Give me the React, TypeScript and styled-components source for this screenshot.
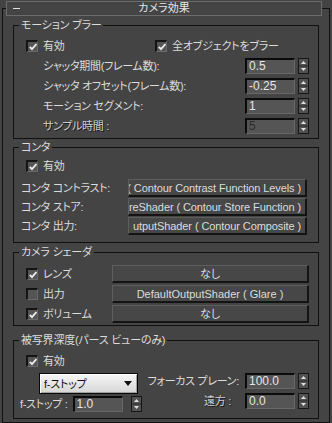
import React from "react";
import styled, { createGlobalStyle } from "styled-components";

const Global = createGlobalStyle`
  html, body { margin: 0; padding: 0; background: #444444; }
  body {
    font-family: "Liberation Sans", "Noto Sans CJK JP", sans-serif;
    font-size: 11px;
    color: #dcdcdc;
    font-feature-settings: "palt";
  }
  #root { padding-top: 1px; }
`;

const Rollout = styled.fieldset`
  box-sizing: border-box;
  width: 328px;
  margin: 0 0 0 2px;
  padding: 0;
  min-inline-size: 0;
  border: 1px solid #111111;
`;

const TitleBar = styled.legend`
  box-sizing: border-box;
  width: 316px;
  height: 15px;
  margin-left: 3px;
  padding: 0;
  border: 1px solid #6c6c6c;
  display: grid;
  grid-template-columns: 1fr auto 1fr;
  align-items: center;
  color: #e6e6e6;
  font-size: 11px;
`;

const Collapse = styled.span`
  width: 7px;
  height: 1px;
  margin-left: 6px;
  background: #e0e0e0;
`;

const TitleText = styled.span`
  line-height: 13px;
  height: 13px;
`;

const RolloutBody = styled.div`
  display: flex;
  flex-direction: column;
  padding: 2px 10px 3px 10px;
`;

const Group = styled.fieldset<{ $mt?: number }>`
  box-sizing: border-box;
  width: 306px;
  margin: ${(p) => p.$mt ?? 0}px 0 0 0;
  padding: 0;
  min-inline-size: 0;
  border: 1px solid #101010;
`;

const GroupLegend = styled.legend`
  margin-left: 5px;
  padding: 0 2px;
  height: 14px;
  line-height: 14px;
  font-size: 11px;
  letter-spacing: -0.2px;
`;

const GroupBody = styled.div<{ $pt: number; $pb: number; $pl: number; $pr: number; $gap?: number }>`
  display: flex;
  flex-direction: column;
  gap: ${(p) => p.$gap ?? 0}px;
  padding: ${(p) => `${p.$pt}px ${p.$pr}px ${p.$pb}px ${p.$pl}px`};
`;

const CheckLine = styled.div<{ $cols?: string; $mb?: number; $pl?: number }>`
  display: grid;
  grid-template-columns: ${(p) => p.$cols ?? "auto"};
  align-items: center;
  height: 12px;
  margin-bottom: ${(p) => p.$mb ?? 0}px;
  padding-left: ${(p) => p.$pl ?? 0}px;
`;

const CheckItem = styled.label`
  display: flex;
  align-items: center;
  gap: 5px;
  height: 12px;
  white-space: nowrap;
  line-height: 12px;
  letter-spacing: -0.2px;
`;

const Box = styled.span`
  box-sizing: border-box;
  flex: none;
  width: 12px;
  height: 12px;
  background: #555555;
  border-style: solid;
  border-width: 2px 1px 1px 2px;
  border-color: #141414 #6a6a6a #6a6a6a #141414;
  display: flex;
  align-items: center;
  justify-content: center;
`;

const Check = ({ checked }: { checked?: boolean }) => (
  <Box>
    {checked && (
      <svg width="8" height="8" viewBox="0 0 8 8">
        <path d="M0.8 3.8 L3 6.2 L7.4 1" fill="none" stroke="#ececec" strokeWidth="1.8" />
      </svg>
    )}
  </Box>
);

const SpinRow = styled.div<{ $indent?: number }>`
  display: flex;
  align-items: center;
  height: 16px;
  padding-left: ${(p) => p.$indent ?? 0}px;
`;

const Label = styled.span<{ $disabled?: boolean; $right?: boolean }>`
  flex: 1;
  white-space: nowrap;
  height: 14px;
  line-height: 14px;
  letter-spacing: -0.3px;
  text-align: ${(p) => (p.$right ? "right" : "left")};
  padding-right: ${(p) => (p.$right ? 14 : 0)}px;
  color: ${(p) => (p.$disabled ? "#cfcfcf" : "#dcdcdc")};
  text-shadow: ${(p) => (p.$disabled ? "1px 1px 0 #1a1a1a" : "none")};
`;

const NumField = styled.div<{ $disabled?: boolean; $w?: number }>`
  box-sizing: border-box;
  flex: none;
  width: ${(p) => p.$w ?? 50}px;
  height: 16px;
  background: #555555;
  border-style: solid;
  border-width: 2px 1px 1px 2px;
  border-color: #0b0b0b #686868 #686868 #0b0b0b;
  color: ${(p) => (p.$disabled ? "#2c2c2c" : "#e6e6e6")};
  font-size: 12px;
  line-height: 13px;
  padding-left: 2px;
  font-family: "Liberation Sans", sans-serif;
`;

const SpinBox = styled.span`
  display: flex;
  flex: none;
  margin-left: 3px;
`;

const Spinner = () => (
  <SpinBox>
    <svg width="11" height="16" viewBox="0 0 11 16">
      <rect x="0.5" y="0.5" width="10" height="15" fill="#525252" stroke="#161616" />
      <line x1="1" y1="8" x2="10" y2="8" stroke="#2a2a2a" />
      <path d="M3 6 L5.5 3 L8 6 Z" fill="#e0e0e0" />
      <path d="M3 10 L5.5 13 L8 10 Z" fill="#e0e0e0" />
    </svg>
  </SpinBox>
);

const ShaderRow = styled.div<{ $labelW: number }>`
  display: grid;
  grid-template-columns: ${(p) => p.$labelW}px 1fr;
  align-items: center;
  height: 18px;
`;

const ShaderButton = styled.div<{ $align?: "center" | "end" }>`
  box-sizing: border-box;
  height: 18px;
  min-width: 0;
  display: flex;
  align-items: center;
  justify-content: ${(p) => (p.$align === "end" ? "flex-end" : "center")};
  padding: 0 ${(p) => (p.$align === "end" ? 4 : 0)}px 0 0;
  overflow: hidden;
  white-space: nowrap;
  background: #474747;
  border-style: solid;
  border-width: 1px 2px 2px 1px;
  border-color: #5e5e5e #141414 #141414 #5e5e5e;
  color: #dcdcdc;
  line-height: 14px;
  letter-spacing: ${(p) => (p.$align === "end" ? "-0.1px" : "0")};
`;

const DofArea = styled.div`
  display: flex;
  gap: 6px;
`;

const DofLeft = styled.div`
  display: flex;
  flex-direction: column;
  gap: 2px;
`;

const DofRight = styled.div`
  flex: 1;
  display: flex;
  flex-direction: column;
  gap: 4px;
`;

const Dropdown = styled.div`
  box-sizing: border-box;
  width: 99px;
  height: 21px;
  margin-left: 19px;
  display: flex;
  align-items: center;
  justify-content: space-between;
  padding: 0 5px 0 4px;
  border: 1px solid #0a0a0a;
  box-shadow: inset 1px 1px 0 #ffffff, inset -1px -1px 0 #a0a0a0;
  background: linear-gradient(#f6f6f6, #d6d6d6);
  color: #111111;
  line-height: 14px;
  letter-spacing: -0.2px;
`;

const FStopRow = styled.div`
  display: flex;
  align-items: center;
  height: 16px;
  gap: 5px;
`;

const Caret = () => (
  <svg width="8" height="5" viewBox="0 0 8 5">
    <path d="M0 0 H8 L4 5 Z" fill="#111" />
  </svg>
);

export default function App() {
  return (
    <>
      <Global />
      <Rollout>
        <TitleBar>
          <Collapse />
          <TitleText>カメラ効果</TitleText>
          <span />
        </TitleBar>
        <RolloutBody>
          <Group>
            <GroupLegend>モーション ブラー</GroupLegend>
            <GroupBody $pt={8} $pb={4} $pl={12} $pr={9} $gap={4}>
              <CheckLine $cols="129px auto" $mb={2}>
                <CheckItem>
                  <Check checked />
                  有効
                </CheckItem>
                <CheckItem>
                  <Check checked />
                  全オブジェクトをブラー
                </CheckItem>
              </CheckLine>
              <SpinRow $indent={17}>
                <Label>シャッタ期間(フレーム数):</Label>
                <NumField>0.5</NumField>
                <Spinner />
              </SpinRow>
              <SpinRow $indent={17}>
                <Label>シャッタ オフセット(フレーム数):</Label>
                <NumField>-0.25</NumField>
                <Spinner />
              </SpinRow>
              <SpinRow $indent={17}>
                <Label>モーション セグメント:</Label>
                <NumField>1</NumField>
                <Spinner />
              </SpinRow>
              <SpinRow $indent={17}>
                <Label $disabled>サンプル時間 :</Label>
                <NumField $disabled>5</NumField>
                <Spinner />
              </SpinRow>
            </GroupBody>
          </Group>

          <Group $mt={1}>
            <GroupLegend>コンタ</GroupLegend>
            <GroupBody $pt={6} $pb={7} $pl={7} $pr={11} $gap={1}>
              <CheckLine $mb={6} $pl={5}>
                <CheckItem>
                  <Check checked />
                  有効
                </CheckItem>
              </CheckLine>
              <ShaderRow $labelW={107}>
                <Label>コンタ コントラスト:</Label>
                <ShaderButton $align="end">( Contour Contrast Function Levels )</ShaderButton>
              </ShaderRow>
              <ShaderRow $labelW={107}>
                <Label>コンタ ストア:</Label>
                <ShaderButton $align="end">reShader ( Contour Store Function )</ShaderButton>
              </ShaderRow>
              <ShaderRow $labelW={107}>
                <Label>コンタ 出力:</Label>
                <ShaderButton $align="end">utputShader ( Contour Composite )</ShaderButton>
              </ShaderRow>
            </GroupBody>
          </Group>

          <Group $mt={2}>
            <GroupLegend>カメラ シェーダ</GroupLegend>
            <GroupBody $pt={6} $pb={2} $pl={12} $pr={9} $gap={2}>
              <ShaderRow $labelW={86}>
                <CheckItem>
                  <Check checked />
                  レンズ
                </CheckItem>
                <ShaderButton>なし</ShaderButton>
              </ShaderRow>
              <ShaderRow $labelW={86}>
                <CheckItem>
                  <Check />
                  出力
                </CheckItem>
                <ShaderButton>DefaultOutputShader ( Glare )</ShaderButton>
              </ShaderRow>
              <ShaderRow $labelW={86}>
                <CheckItem>
                  <Check checked />
                  ボリューム
                </CheckItem>
                <ShaderButton>なし</ShaderButton>
              </ShaderRow>
            </GroupBody>
          </Group>

          <Group $mt={7}>
            <GroupLegend>被写界深度(パース ビューのみ)</GroupLegend>
            <GroupBody $pt={8} $pb={6} $pl={6} $pr={9}>
              <CheckLine $mb={6} $pl={6}>
                <CheckItem>
                  <Check checked />
                  有効
                </CheckItem>
              </CheckLine>
              <DofArea>
                <DofLeft>
                  <Dropdown>
                    <span>f-ストップ</span>
                    <Caret />
                  </Dropdown>
                  <FStopRow>
                    <Label>f-ストップ :</Label>
                    <NumField>1.0</NumField>
                    <Spinner />
                  </FStopRow>
                </DofLeft>
                <DofRight>
                  <SpinRow>
                    <Label>フォーカス プレーン:</Label>
                    <NumField>100.0</NumField>
                    <Spinner />
                  </SpinRow>
                  <SpinRow>
                    <Label $disabled $right>遠方 :</Label>
                    <NumField>0.0</NumField>
                    <Spinner />
                  </SpinRow>
                </DofRight>
              </DofArea>
            </GroupBody>
          </Group>
        </RolloutBody>
      </Rollout>
    </>
  );
}
